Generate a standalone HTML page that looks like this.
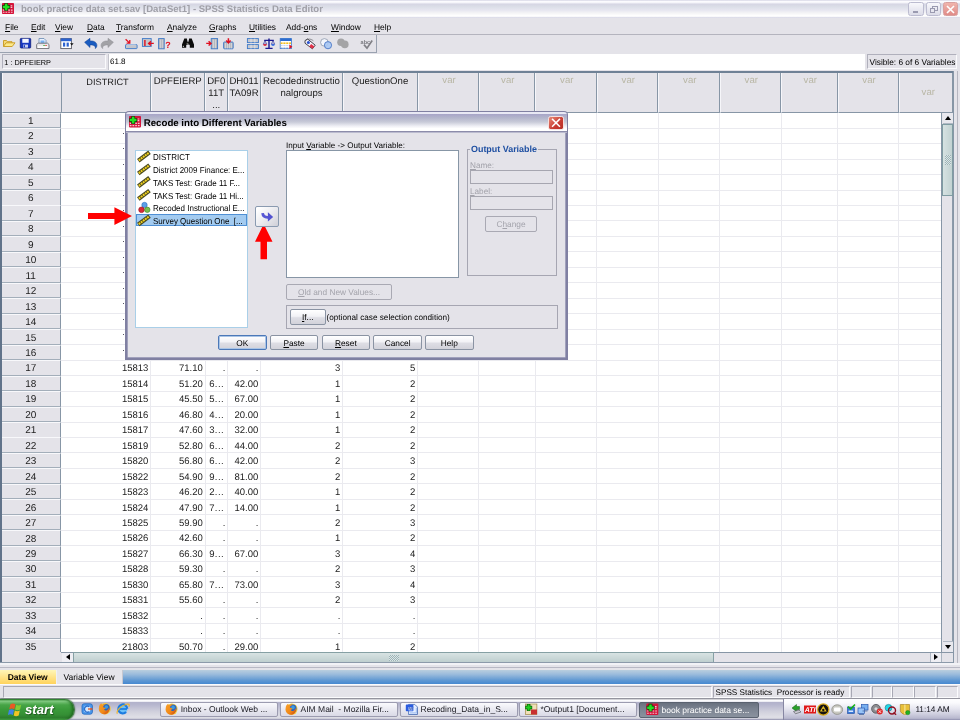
<!DOCTYPE html>
<html><head><meta charset="utf-8"><title>SPSS Statistics Data Editor</title>
<style>
*{box-sizing:border-box;margin:0;padding:0}
html,body{width:960px;height:720px;overflow:hidden}
body{position:relative;background:#e4e3e9;font-family:"Liberation Sans",sans-serif;font-size:9px;color:#000;text-rendering:geometricPrecision}
.a{position:absolute}
svg{position:absolute;overflow:visible}
u{text-decoration:underline}
#title{left:0;top:0;width:960px;height:19px;background:linear-gradient(#cfcfe0 0,#fbfbfe 1.2px,#fbfbfe 2.2px,#d6d6e4 4.2px,#dcdfe8 7px,#e6e6f0 10px,#f4f4f6 13px,#fefefe 15.5px,#fefefe 16.3px,#d8d8e6 17.7px,#e3e2e8 19px)}
#title .t{left:21px;top:3.7px;font-weight:bold;font-size:9.55px;color:#a0a0a8;white-space:nowrap}
#menu{left:0;top:18px;width:960px;height:16px;background:#e4e3e9}
#menu span{position:absolute;top:3.5px;font-size:8.4px;white-space:nowrap}
.wb{position:absolute;top:2px;width:15.5px;height:14px;border-radius:2.5px;border:1px solid #bcbcd0;background:linear-gradient(#f8f8fc,#dcdce8)}
.hc{position:absolute;top:73px;height:39.5px;background:#e4e3e9;border-left:1px solid #f6f6fa;border-right:1px solid #8796a6;border-bottom:1px solid #8796a6;text-align:center;font-size:9.6px;line-height:12px;padding-top:2.8px;overflow:hidden;white-space:nowrap;color:#1c1c1c}
.hc.v{color:#b8b6a4}
.hc span{display:inline-block}
.rh{position:absolute;left:2px;width:58.5px;height:15.5px;background:#e4e3e9;border-top:1px solid #f8f8fb;border-bottom:1px solid #a3aeba;border-right:1px solid #8796a6;text-align:center;font-size:9.5px;line-height:13.5px}
.rh span{display:inline-block;color:#1c1c1c;position:relative;top:1.3px;font-size:10px}
.c{position:absolute;font-size:9.5px;line-height:15.5px;height:15.5px;text-align:right;white-space:nowrap;margin-top:1.2px;color:#1c1c1c}
.vl{position:absolute;width:1px;background:#eaeaef;top:113px;height:539px}
.hl{position:absolute;height:1px;background:#eaeaef;left:61px;width:881px}
.btn{position:absolute;border:1px solid #8a93a3;border-radius:2px;background:linear-gradient(#ffffff,#f2f2f6 45%,#dedee5 55%,#d2d2da);font-size:8.3px;text-align:center;white-space:nowrap}
.btn.dis{background:#e4e3e9;border-color:#a9a9b3;color:#a4a4ac}
.li{position:absolute;left:152.5px;font-size:8.6px;transform:scaleX(0.93);transform-origin:0 50%;white-space:nowrap;line-height:12px;height:12px}
.tk{position:absolute;top:702px;height:15px;border:1px solid #9c9cb0;border-radius:2px;background:linear-gradient(#fafafd,#e9e9f1 50%,#dadae6);font-size:8.5px;line-height:13px;white-space:nowrap;overflow:hidden;color:#202028;padding-left:20px}
.sp{position:absolute;top:685.5px;height:12px;border-top:1px solid #a8a8b4;border-left:1px solid #a8a8b4;border-bottom:1px solid #fbfbfd;border-right:1px solid #fbfbfd}
#root{position:absolute;left:0;top:0;width:960px;height:720px;will-change:transform;transform:translateZ(0)}
</style></head><body><div id="root">

<div id="title" class="a"><div class="a t">book practice data set.sav [DataSet1] - SPSS Statistics Data Editor</div>
<svg style="left:1.8px;top:3.3px" width="12" height="11" viewBox="0 0 12 11.4" preserveAspectRatio="none"><rect x="0" y="0" width="12" height="11.4" rx="0.8" fill="#d4143a"/><path d="M8.600 3h2M8.600 4.600h2M0.800 7.400h10M0.800 9.600h10" stroke="#f6c6d0" stroke-width="1.100" stroke-dasharray="1.700 1"/><path d="M4.200 0.200v7.800M0.300 4.100h7.800" stroke="#0a3a0a" stroke-width="3.800"/><path d="M4.200 0.800v6.600M0.900 4.100h6.600" stroke="#22e022" stroke-width="2.500"/></svg>
<div class="wb" style="left:908px"><div class="a" style="left:4px;top:8px;width:5px;height:2px;background:#9a9ab0"></div></div>
<div class="wb" style="left:925.5px"><div class="a" style="left:5.5px;top:2.5px;width:5.5px;height:5px;border:1px solid #9a9ab0"></div><div class="a" style="left:3px;top:4.5px;width:5.5px;height:5px;border:1px solid #9a9ab0;background:#e6e6ef"></div></div>
<div class="wb" style="left:942.5px;border-color:#d8a0a0;background:linear-gradient(#f0b4ac,#e08c88)"><svg style="left:2.5px;top:2px" width="9" height="9" viewBox="0 0 9 9"><path d="M1 1l7 7M8 1l-7 7" stroke="#fff" stroke-width="1.6"/></svg></div>
</div>
<div id="menu" class="a"><span style="left:5px"><u>F</u>ile</span><span style="left:31px"><u>E</u>dit</span><span style="left:55px"><u>V</u>iew</span><span style="left:87px"><u>D</u>ata</span><span style="left:116px"><u>T</u>ransform</span><span style="left:167px"><u>A</u>nalyze</span><span style="left:209px"><u>G</u>raphs</span><span style="left:249px"><u>U</u>tilities</span><span style="left:286px">Add-<u>o</u>ns</span><span style="left:331px"><u>W</u>indow</span><span style="left:374px"><u>H</u>elp</span></div>
<div class="a" style="left:0;top:34px;width:960px;height:1px;background:#b4b4be"></div>
<div class="a" style="left:0;top:35px;width:377px;height:18px;border-right:1px solid #9aa2b0;border-bottom:1.5px solid #9aa2b0"></div>
<svg style="left:0;top:0" width="400" height="54" viewBox="0 0 400 54">
<!-- open -->
<path d="M3.5 46.5V40.5h3l1 1.2h4.5v1.5" fill="#f4d878" stroke="#c89820" stroke-width="0.9"/>
<path d="M3.5 46.5L6 42.8h9L12.2 46.5z" fill="#fce98a" stroke="#c89820" stroke-width="0.9"/>
<!-- save -->
<rect x="20.3" y="38.4" width="10.4" height="9.6" rx="0.8" fill="#1838c0" stroke="#0c1c78" stroke-width="0.8"/>
<rect x="22.3" y="38.8" width="6.4" height="4" fill="#f4f6ff"/>
<rect x="23" y="44.6" width="5" height="3" fill="#c8d0f0"/><rect x="23.6" y="45.2" width="1.4" height="2.2" fill="#1838c0"/>
<!-- print -->
<path d="M39 43.5V38.5h5l2 2v3z" fill="#eaf2ff" stroke="#6688b0" stroke-width="0.8"/>
<rect x="40.5" y="40.5" width="4" height="2.6" fill="#78b0f0"/>
<path d="M36.6 48.5v-4l1.6-1.3h9.4l1.4 1.3v4z" fill="#e8e8ea" stroke="#707078" stroke-width="0.9"/>
<rect x="38" y="46.3" width="9.6" height="1.6" fill="#fff"/><rect x="45.3" y="45" width="1.5" height="0.9" fill="#e03030"/><rect x="43.3" y="45" width="1.5" height="0.9" fill="#30b030"/>
<!-- dialog recall -->
<rect x="60.8" y="38.6" width="10.6" height="10" fill="#fff" stroke="#5a5a66" stroke-width="0.9"/>
<rect x="60.8" y="38.4" width="10.6" height="2.8" fill="#2c62d0"/>
<rect x="63" y="42.6" width="2.2" height="4" fill="#2c62d0"/><rect x="66.6" y="42.6" width="2.2" height="4" fill="#2c62d0"/>
<path d="M70 43.2h3.6l-1.8 2.2z" fill="#101010"/>
<!-- undo -->
<path d="M84.6 42.3L90 38.3v2.6c4.5-.2 7 1.8 6.9 4.6c-.1 1.4-.6 2.3-1.7 3.1c.6-1.8-.2-3.8-5.2-3.7v2.6z" fill="#1a5cc0" stroke="#0c3c90" stroke-width="0.5"/>
<!-- redo -->
<path d="M113.4 42.3L108 38.3v2.6c-4.5-.2-7 1.8-6.9 4.6c.1 1.4.6 2.3 1.7 3.1c-.6-1.8.2-3.8 5.2-3.7v2.6z" fill="#a2a2a6" stroke="#8c8c92" stroke-width="0.5"/>
<!-- goto case -->
<rect x="125.5" y="44.6" width="11.6" height="4" rx="0.6" fill="#c4c6cc" stroke="#3c78c8" stroke-width="0.9"/>
<path d="M126.8 44.8h9" stroke="#fff" stroke-width="0.6"/>
<path d="M125.6 39.2l3.6 3.4M129.8 40v3.2h-3.2" fill="none" stroke="#e01020" stroke-width="1.3"/>
<!-- goto variable -->
<rect x="142.4" y="38.6" width="8.8" height="7.8" fill="#c4c6cc" stroke="#3c78c8" stroke-width="0.9"/>
<rect x="144.2" y="40" width="1.4" height="6" fill="#e01020"/>
<path d="M153.8 43.4h-4.6M151 41.2l-2.4 2.2l2.4 2.2" fill="none" stroke="#e01020" stroke-width="1.4"/>
<!-- variables -->
<rect x="158.6" y="38.6" width="5.6" height="10.2" fill="#b4b6bc" stroke="#3c78c8" stroke-width="0.9"/>
<path d="M160.5 39.5v8.6M162.4 39.5v8.6" stroke="#d8dae0" stroke-width="0.7"/>
<text x="165.2" y="47.6" font-family="Liberation Sans, sans-serif" font-weight="bold" font-size="9" fill="#e01020">?</text>
<!-- find binoculars -->
<path d="M184.300 38.400h2.600l.6 3.400h1l.6-3.400h2.600l2.300 6.200v3.200h-4.200v-2.600l-.7-.6h-2.200l-.7.6v2.600h-4.200v-3.200z" fill="#0c0c0c"/><rect x="182.800" y="45.800" width="1.200" height="1.200" fill="#b0b0b0"/><rect x="186.600" y="42.800" width="1.800" height="1.200" fill="#707068"/>
<!-- insert cases -->
<rect x="211.2" y="38.6" width="6.4" height="10.2" fill="#b4b6bc" stroke="#3c78c8" stroke-width="0.9"/>
<path d="M213.3 39.5v8.6M215.4 39.5v8.6" stroke="#e4e6ea" stroke-width="0.7"/>
<path d="M206.200 43.400h4.400M208.600 41.200l2.400 2.200l-2.400 2.200" fill="none" stroke="#e01020" stroke-width="1.4"/>
<!-- insert variable -->
<rect x="223.6" y="42" width="9.6" height="6.800" rx="0.800" fill="#b4b6bc" stroke="#3c78c8" stroke-width="0.9"/>
<path d="M225.600 43v5.400M227.600 43v5.400M229.600 43v5.400M231.400 43v5.400" stroke="#e4e6ea" stroke-width="0.7"/>
<path d="M228.400 38.200v4.400M226.200 40.600l2.200 2.400l2.200-2.400" fill="none" stroke="#e01020" stroke-width="1.500"/>
<!-- split file -->
<rect x="247.400" y="38.600" width="11" height="4" fill="#c8cad0" stroke="#3c78c8" stroke-width="0.9"/>
<rect x="247.400" y="44.600" width="11" height="4" fill="#c8cad0" stroke="#3c78c8" stroke-width="0.9"/>
<path d="M251 38.600v4M254.800 38.600v4M251 44.600v4M254.800 44.600v4" stroke="#eceef2" stroke-width="0.7"/>
<!-- weight -->
<path d="M269 38.400v9.600M265.400 48.400h7.200M264.200 40.400h9.600" stroke="#1a1a90" stroke-width="1.400" fill="none"/>
<path d="M263.400 44.200l1.600-3.600l1.600 3.600zM271.400 44.200l1.600-3.600l1.600 3.600z" fill="none" stroke="#1a1a90" stroke-width="0.6"/>
<path d="M263.200 44.200h3.600c0 2-3.600 2-3.600 0z" fill="#e01020"/><path d="M271.200 44.200h3.600c0 2-3.600 2-3.600 0z" fill="#2060e0"/>
<!-- select cases -->
<rect x="280.200" y="38.600" width="11.200" height="10" fill="#fff" stroke="#3c78c8" stroke-width="0.8"/>
<rect x="280.200" y="38.400" width="11.200" height="2.600" fill="#2c6cd0"/>
<path d="M280.600 43.200h10.400" stroke="#f4c020" stroke-width="1.600"/>
<path d="M280.600 45.400h10.400M280.600 47.400h10.400" stroke="#a8c0e8" stroke-width="0.7"/>
<path d="M283 41v7.400M285.800 41v7.400M288.600 41v7.400" stroke="#fff" stroke-width="0.7"/>
<path d="M289.400 44.600l3 2.200l-3 2.200z" fill="#e01020"/>
<!-- value labels tag -->
<path d="M305 40.600l2.600-1.600l7.600 6.200l-2.800 3.600l-7.400-5.600z" fill="#f4f4fa" stroke="#303038" stroke-width="0.9"/>
<path d="M311.200 44l3.200 2.400l-2 2.400l-3.200-2.400z" fill="#e03048"/>
<circle cx="308.400" cy="42.600" r="1.500" fill="#2850d0"/>
<path d="M306.400 40.200c2-2 5-1 7 .6" fill="none" stroke="#505058" stroke-width="0.6"/>
<!-- use sets -->
<circle cx="324.400" cy="42.400" r="3.800" fill="#f4f6fc" stroke="#8a96a8" stroke-width="0.8"/>
<circle cx="328" cy="45.200" r="3.600" fill="#a8c8f4" fill-opacity="0.9" stroke="#3c6cc0" stroke-width="0.8"/>
<!-- show all -->
<circle cx="341" cy="42.200" r="3.800" fill="#a4a4a6"/><circle cx="344.800" cy="44.400" r="3.800" fill="#a4a4a6"/>
<!-- spell -->
<text x="360.600" y="43.800" font-family="Liberation Sans, sans-serif" font-size="5.500" fill="#7a7a80" font-weight="bold">abc</text>
<path d="M364 44.600l3 3.600l5.200-7.600" fill="none" stroke="#808086" stroke-width="1.700"/>
</svg>

<div class="a" style="left:2px;top:54px;width:104px;height:14.5px;border:1px solid #b0b0bc;border-right-color:#fafafc;border-bottom-color:#fafafc;font-size:7.3px;line-height:15.8px;padding-left:1.3px;white-space:nowrap;overflow:hidden">1 : DPFEIERP</div>
<div class="a" style="left:108px;top:54px;width:757px;height:15.5px;background:#fff;border-left:1px solid #c4c4cc;font-size:8px;line-height:16.8px;padding-left:1px;overflow:hidden">61.8</div>
<div class="a" style="left:867px;top:54px;width:90px;height:14.5px;border:1px solid #b0b0bc;border-right-color:#fafafc;border-bottom-color:#fafafc;font-size:8.3px;line-height:14.5px;padding-left:1.5px;white-space:nowrap">Visible: 6 of 6 Variables</div>
<div class="a" style="left:0;top:71px;width:1.8px;height:591px;background:#61738a"></div>
<div class="a" style="left:61px;top:113px;width:881px;height:539px;background:#fff"></div>
<div class="vl" style="left:150.0px"></div>
<div class="vl" style="left:204.5px"></div>
<div class="vl" style="left:227.0px"></div>
<div class="vl" style="left:260.0px"></div>
<div class="vl" style="left:342.0px"></div>
<div class="vl" style="left:417.0px"></div>
<div class="vl" style="left:478.0px"></div>
<div class="vl" style="left:534.5px"></div>
<div class="vl" style="left:596.0px"></div>
<div class="vl" style="left:657.5px"></div>
<div class="vl" style="left:719.0px"></div>
<div class="vl" style="left:780.5px"></div>
<div class="vl" style="left:837.0px"></div>
<div class="vl" style="left:898.0px"></div>
<div class="hl" style="top:127.69999999999999px"></div>
<div class="hl" style="top:143.165px"></div>
<div class="hl" style="top:158.63px"></div>
<div class="hl" style="top:174.09499999999997px"></div>
<div class="hl" style="top:189.56px"></div>
<div class="hl" style="top:205.02499999999998px"></div>
<div class="hl" style="top:220.48999999999998px"></div>
<div class="hl" style="top:235.95499999999998px"></div>
<div class="hl" style="top:251.42px"></div>
<div class="hl" style="top:266.885px"></div>
<div class="hl" style="top:282.35px"></div>
<div class="hl" style="top:297.815px"></div>
<div class="hl" style="top:313.28px"></div>
<div class="hl" style="top:328.745px"></div>
<div class="hl" style="top:344.21px"></div>
<div class="hl" style="top:359.67499999999995px"></div>
<div class="hl" style="top:375.14px"></div>
<div class="hl" style="top:390.60499999999996px"></div>
<div class="hl" style="top:406.07px"></div>
<div class="hl" style="top:421.53499999999997px"></div>
<div class="hl" style="top:437.0px"></div>
<div class="hl" style="top:452.465px"></div>
<div class="hl" style="top:467.93px"></div>
<div class="hl" style="top:483.395px"></div>
<div class="hl" style="top:498.85999999999996px"></div>
<div class="hl" style="top:514.325px"></div>
<div class="hl" style="top:529.79px"></div>
<div class="hl" style="top:545.255px"></div>
<div class="hl" style="top:560.72px"></div>
<div class="hl" style="top:576.185px"></div>
<div class="hl" style="top:591.65px"></div>
<div class="hl" style="top:607.115px"></div>
<div class="hl" style="top:622.5799999999999px"></div>
<div class="hl" style="top:638.045px"></div>
<div class="a" style="left:0;top:70.5px;width:953px;height:2.5px;background:#6f8196"></div>
<div class="hc" style="left:2px;width:59.8px;z-index:1"></div>
<div class="hc" style="left:61px;width:89.5px;padding-left:3.5px;font-size:9.2px"><span>DISTRICT</span></div>
<div class="hc" style="left:150.5px;width:54.5px"><span>DPFEIERP</span></div>
<div class="hc" style="left:205px;width:22.5px"><span>DF0<br>11T<br>...</span></div>
<div class="hc" style="left:227.5px;width:33.0px"><span>DH011<br>TA09R</span></div>
<div class="hc" style="left:260.5px;width:82.0px"><span>Recodedinstructio<br>nalgroups</span></div>
<div class="hc" style="left:342.5px;width:75.0px"><span>QuestionOne</span></div>
<div class="hc v" style="left:417.5px;width:61.0px;padding-left:2px;padding-top:2.3px"><span>var</span></div>
<div class="hc v" style="left:478.5px;width:56.5px;padding-left:2px;padding-top:2.3px"><span>var</span></div>
<div class="hc v" style="left:535px;width:61.5px;padding-left:2px;padding-top:2.3px"><span>var</span></div>
<div class="hc v" style="left:596.5px;width:61.5px;padding-left:2px;padding-top:2.3px"><span>var</span></div>
<div class="hc v" style="left:658px;width:61.5px;padding-left:2px;padding-top:2.3px"><span>var</span></div>
<div class="hc v" style="left:719.5px;width:61.5px;padding-left:2px;padding-top:2.3px"><span>var</span></div>
<div class="hc v" style="left:781px;width:56.5px;padding-left:2px;padding-top:2.3px"><span>var</span></div>
<div class="hc v" style="left:837.5px;width:61.0px;padding-left:2px;padding-top:2.3px"><span>var</span></div>
<div class="hc v" style="left:898.5px;width:54.0px;padding-top:14.300px;padding-left:5.5px"><span>var</span></div>
<div class="rh" style="top:112.7px"><span>1</span></div>
<div class="rh" style="top:128.165px"><span>2</span></div>
<div class="rh" style="top:143.63px"><span>3</span></div>
<div class="rh" style="top:159.095px"><span>4</span></div>
<div class="rh" style="top:174.56px"><span>5</span></div>
<div class="rh" style="top:190.025px"><span>6</span></div>
<div class="rh" style="top:205.49px"><span>7</span></div>
<div class="rh" style="top:220.95499999999998px"><span>8</span></div>
<div class="rh" style="top:236.42000000000002px"><span>9</span></div>
<div class="rh" style="top:251.885px"><span>10</span></div>
<div class="rh" style="top:267.35px"><span>11</span></div>
<div class="rh" style="top:282.815px"><span>12</span></div>
<div class="rh" style="top:298.28px"><span>13</span></div>
<div class="rh" style="top:313.745px"><span>14</span></div>
<div class="rh" style="top:329.21px"><span>15</span></div>
<div class="rh" style="top:344.675px"><span>16</span></div>
<div class="rh" style="top:360.14px"><span>17</span></div>
<div class="rh" style="top:375.60499999999996px"><span>18</span></div>
<div class="rh" style="top:391.07px"><span>19</span></div>
<div class="rh" style="top:406.53499999999997px"><span>20</span></div>
<div class="rh" style="top:422.0px"><span>21</span></div>
<div class="rh" style="top:437.465px"><span>22</span></div>
<div class="rh" style="top:452.93px"><span>23</span></div>
<div class="rh" style="top:468.395px"><span>24</span></div>
<div class="rh" style="top:483.85999999999996px"><span>25</span></div>
<div class="rh" style="top:499.325px"><span>26</span></div>
<div class="rh" style="top:514.79px"><span>27</span></div>
<div class="rh" style="top:530.255px"><span>28</span></div>
<div class="rh" style="top:545.72px"><span>29</span></div>
<div class="rh" style="top:561.1850000000001px"><span>30</span></div>
<div class="rh" style="top:576.65px"><span>31</span></div>
<div class="rh" style="top:592.115px"><span>32</span></div>
<div class="rh" style="top:607.58px"><span>33</span></div>
<div class="rh" style="top:623.045px"><span>34</span></div>
<div class="rh" style="top:638.51px"><span>35</span></div>
<div class="a" style="left:2px;top:651.5px;width:59px;height:11px;background:#e4e3e9"></div>
<div class="c" style="top:360.14px;left:61px;width:87.3px">15813</div>
<div class="c" style="top:360.14px;left:150.5px;width:52.3px">71.10</div>
<div class="c" style="top:360.14px;left:205px;width:20.3px">.</div>
<div class="c" style="top:360.14px;left:227.5px;width:30.8px">.</div>
<div class="c" style="top:360.14px;left:260.5px;width:79.8px">3</div>
<div class="c" style="top:360.14px;left:342.5px;width:72.8px">5</div>
<div class="c" style="top:375.60499999999996px;left:61px;width:87.3px">15814</div>
<div class="c" style="top:375.60499999999996px;left:150.5px;width:52.3px">51.20</div>
<div class="c" style="top:375.60499999999996px;left:209.2px;text-align:left;letter-spacing:0.4px;transform-origin:0 50%">6...</div>
<div class="c" style="top:375.60499999999996px;left:227.5px;width:30.8px">42.00</div>
<div class="c" style="top:375.60499999999996px;left:260.5px;width:79.8px">1</div>
<div class="c" style="top:375.60499999999996px;left:342.5px;width:72.8px">2</div>
<div class="c" style="top:391.07px;left:61px;width:87.3px">15815</div>
<div class="c" style="top:391.07px;left:150.5px;width:52.3px">45.50</div>
<div class="c" style="top:391.07px;left:209.2px;text-align:left;letter-spacing:0.4px;transform-origin:0 50%">5...</div>
<div class="c" style="top:391.07px;left:227.5px;width:30.8px">67.00</div>
<div class="c" style="top:391.07px;left:260.5px;width:79.8px">1</div>
<div class="c" style="top:391.07px;left:342.5px;width:72.8px">2</div>
<div class="c" style="top:406.53499999999997px;left:61px;width:87.3px">15816</div>
<div class="c" style="top:406.53499999999997px;left:150.5px;width:52.3px">46.80</div>
<div class="c" style="top:406.53499999999997px;left:209.2px;text-align:left;letter-spacing:0.4px;transform-origin:0 50%">4...</div>
<div class="c" style="top:406.53499999999997px;left:227.5px;width:30.8px">20.00</div>
<div class="c" style="top:406.53499999999997px;left:260.5px;width:79.8px">1</div>
<div class="c" style="top:406.53499999999997px;left:342.5px;width:72.8px">2</div>
<div class="c" style="top:422.0px;left:61px;width:87.3px">15817</div>
<div class="c" style="top:422.0px;left:150.5px;width:52.3px">47.60</div>
<div class="c" style="top:422.0px;left:209.2px;text-align:left;letter-spacing:0.4px;transform-origin:0 50%">3...</div>
<div class="c" style="top:422.0px;left:227.5px;width:30.8px">32.00</div>
<div class="c" style="top:422.0px;left:260.5px;width:79.8px">1</div>
<div class="c" style="top:422.0px;left:342.5px;width:72.8px">2</div>
<div class="c" style="top:437.465px;left:61px;width:87.3px">15819</div>
<div class="c" style="top:437.465px;left:150.5px;width:52.3px">52.80</div>
<div class="c" style="top:437.465px;left:209.2px;text-align:left;letter-spacing:0.4px;transform-origin:0 50%">6...</div>
<div class="c" style="top:437.465px;left:227.5px;width:30.8px">44.00</div>
<div class="c" style="top:437.465px;left:260.5px;width:79.8px">2</div>
<div class="c" style="top:437.465px;left:342.5px;width:72.8px">2</div>
<div class="c" style="top:452.93px;left:61px;width:87.3px">15820</div>
<div class="c" style="top:452.93px;left:150.5px;width:52.3px">56.80</div>
<div class="c" style="top:452.93px;left:209.2px;text-align:left;letter-spacing:0.4px;transform-origin:0 50%">6...</div>
<div class="c" style="top:452.93px;left:227.5px;width:30.8px">42.00</div>
<div class="c" style="top:452.93px;left:260.5px;width:79.8px">2</div>
<div class="c" style="top:452.93px;left:342.5px;width:72.8px">3</div>
<div class="c" style="top:468.395px;left:61px;width:87.3px">15822</div>
<div class="c" style="top:468.395px;left:150.5px;width:52.3px">54.90</div>
<div class="c" style="top:468.395px;left:209.2px;text-align:left;letter-spacing:0.4px;transform-origin:0 50%">9...</div>
<div class="c" style="top:468.395px;left:227.5px;width:30.8px">81.00</div>
<div class="c" style="top:468.395px;left:260.5px;width:79.8px">2</div>
<div class="c" style="top:468.395px;left:342.5px;width:72.8px">2</div>
<div class="c" style="top:483.85999999999996px;left:61px;width:87.3px">15823</div>
<div class="c" style="top:483.85999999999996px;left:150.5px;width:52.3px">46.20</div>
<div class="c" style="top:483.85999999999996px;left:209.2px;text-align:left;letter-spacing:0.4px;transform-origin:0 50%">2...</div>
<div class="c" style="top:483.85999999999996px;left:227.5px;width:30.8px">40.00</div>
<div class="c" style="top:483.85999999999996px;left:260.5px;width:79.8px">1</div>
<div class="c" style="top:483.85999999999996px;left:342.5px;width:72.8px">2</div>
<div class="c" style="top:499.325px;left:61px;width:87.3px">15824</div>
<div class="c" style="top:499.325px;left:150.5px;width:52.3px">47.90</div>
<div class="c" style="top:499.325px;left:209.2px;text-align:left;letter-spacing:0.4px;transform-origin:0 50%">7...</div>
<div class="c" style="top:499.325px;left:227.5px;width:30.8px">14.00</div>
<div class="c" style="top:499.325px;left:260.5px;width:79.8px">1</div>
<div class="c" style="top:499.325px;left:342.5px;width:72.8px">2</div>
<div class="c" style="top:514.79px;left:61px;width:87.3px">15825</div>
<div class="c" style="top:514.79px;left:150.5px;width:52.3px">59.90</div>
<div class="c" style="top:514.79px;left:205px;width:20.3px">.</div>
<div class="c" style="top:514.79px;left:227.5px;width:30.8px">.</div>
<div class="c" style="top:514.79px;left:260.5px;width:79.8px">2</div>
<div class="c" style="top:514.79px;left:342.5px;width:72.8px">3</div>
<div class="c" style="top:530.255px;left:61px;width:87.3px">15826</div>
<div class="c" style="top:530.255px;left:150.5px;width:52.3px">42.60</div>
<div class="c" style="top:530.255px;left:205px;width:20.3px">.</div>
<div class="c" style="top:530.255px;left:227.5px;width:30.8px">.</div>
<div class="c" style="top:530.255px;left:260.5px;width:79.8px">1</div>
<div class="c" style="top:530.255px;left:342.5px;width:72.8px">2</div>
<div class="c" style="top:545.72px;left:61px;width:87.3px">15827</div>
<div class="c" style="top:545.72px;left:150.5px;width:52.3px">66.30</div>
<div class="c" style="top:545.72px;left:209.2px;text-align:left;letter-spacing:0.4px;transform-origin:0 50%">9...</div>
<div class="c" style="top:545.72px;left:227.5px;width:30.8px">67.00</div>
<div class="c" style="top:545.72px;left:260.5px;width:79.8px">3</div>
<div class="c" style="top:545.72px;left:342.5px;width:72.8px">4</div>
<div class="c" style="top:561.1850000000001px;left:61px;width:87.3px">15828</div>
<div class="c" style="top:561.1850000000001px;left:150.5px;width:52.3px">59.30</div>
<div class="c" style="top:561.1850000000001px;left:205px;width:20.3px">.</div>
<div class="c" style="top:561.1850000000001px;left:227.5px;width:30.8px">.</div>
<div class="c" style="top:561.1850000000001px;left:260.5px;width:79.8px">2</div>
<div class="c" style="top:561.1850000000001px;left:342.5px;width:72.8px">3</div>
<div class="c" style="top:576.65px;left:61px;width:87.3px">15830</div>
<div class="c" style="top:576.65px;left:150.5px;width:52.3px">65.80</div>
<div class="c" style="top:576.65px;left:209.2px;text-align:left;letter-spacing:0.4px;transform-origin:0 50%">7...</div>
<div class="c" style="top:576.65px;left:227.5px;width:30.8px">73.00</div>
<div class="c" style="top:576.65px;left:260.5px;width:79.8px">3</div>
<div class="c" style="top:576.65px;left:342.5px;width:72.8px">4</div>
<div class="c" style="top:592.115px;left:61px;width:87.3px">15831</div>
<div class="c" style="top:592.115px;left:150.5px;width:52.3px">55.60</div>
<div class="c" style="top:592.115px;left:205px;width:20.3px">.</div>
<div class="c" style="top:592.115px;left:227.5px;width:30.8px">.</div>
<div class="c" style="top:592.115px;left:260.5px;width:79.8px">2</div>
<div class="c" style="top:592.115px;left:342.5px;width:72.8px">3</div>
<div class="c" style="top:607.58px;left:61px;width:87.3px">15832</div>
<div class="c" style="top:607.58px;left:150.5px;width:52.3px">.</div>
<div class="c" style="top:607.58px;left:205px;width:20.3px">.</div>
<div class="c" style="top:607.58px;left:227.5px;width:30.8px">.</div>
<div class="c" style="top:607.58px;left:260.5px;width:79.8px">.</div>
<div class="c" style="top:607.58px;left:342.5px;width:72.8px">.</div>
<div class="c" style="top:623.045px;left:61px;width:87.3px">15833</div>
<div class="c" style="top:623.045px;left:150.5px;width:52.3px">.</div>
<div class="c" style="top:623.045px;left:205px;width:20.3px">.</div>
<div class="c" style="top:623.045px;left:227.5px;width:30.8px">.</div>
<div class="c" style="top:623.045px;left:260.5px;width:79.8px">.</div>
<div class="c" style="top:623.045px;left:342.5px;width:72.8px">.</div>
<div class="c" style="top:638.51px;left:61px;width:87.3px">21803</div>
<div class="c" style="top:638.51px;left:150.5px;width:52.3px">50.70</div>
<div class="c" style="top:638.51px;left:205px;width:20.3px">.</div>
<div class="c" style="top:638.51px;left:227.5px;width:30.8px">29.00</div>
<div class="c" style="top:638.51px;left:260.5px;width:79.8px">1</div>
<div class="c" style="top:638.51px;left:342.5px;width:72.8px">2</div>
<div class="a" style="left:941px;top:113px;width:12px;height:549.5px;background:#e4e3e9;border-left:1.5px solid #8796a6;border-right:1px solid #8c9aaa"></div>
<div class="a" style="left:942.5px;top:113px;width:10px;height:10.5px;background:#e8e8ee;border-bottom:1px solid #b0b8c4"><svg style="left:2px;top:3px" width="6" height="4" viewBox="0 0 6 4"><path d="M0 4L3 0L6 4z" fill="#000"/></svg></div>
<div class="a" style="left:942px;top:124px;width:10.5px;height:72px;background:linear-gradient(90deg,#d6e2e2,#c2d2d2);border:1px solid #7f9ca2"></div>
<div class="a" style="left:944.5px;top:155px;width:6px;height:10px;background:repeating-conic-gradient(#9db3b7 0 25%,#dbe6e6 0 50%) 0 0/2px 2px"></div>
<div class="a" style="left:942.5px;top:640.5px;width:10px;height:11px;background:#e8e8ee;border-top:1px solid #b0b8c4"><svg style="left:2px;top:3.5px" width="6" height="4" viewBox="0 0 6 4"><path d="M0 0L3 4L6 0z" fill="#000"/></svg></div>
<div class="a" style="left:61px;top:651.5px;width:892px;height:11px;background:#e4e3e9;border-top:1px solid #8796a6;border-bottom:1px solid #8c9aaa"></div>
<div class="a" style="left:61.5px;top:652.5px;width:11.5px;height:9.5px;background:#eeeef3"><svg style="left:4px;top:1.5px" width="4" height="6" viewBox="0 0 4 6"><path d="M4 0L0 3L4 6z" fill="#000"/></svg></div>
<div class="a" style="left:73px;top:652px;width:641px;height:10.5px;background:linear-gradient(#d8e3e3,#bfcfcf);border:1px solid #86a0a4"></div>
<div class="a" style="left:389px;top:654.5px;width:10px;height:6px;background:repeating-conic-gradient(#9db3b7 0 25%,#dbe6e6 0 50%) 0 0/2px 2px"></div>
<div class="a" style="left:929.5px;top:652.5px;width:11px;height:9.5px;background:#eeeef3;border-left:1px solid #b0b8c4"><svg style="left:3.5px;top:1.5px" width="4" height="6" viewBox="0 0 4 6"><path d="M0 0L4 3L0 6z" fill="#000"/></svg></div>
<div class="a" style="left:941px;top:652.5px;width:11px;height:9px;background:#e4e3e9;border-left:1px solid #aab4c0"></div>
<div class="a" style="left:952.5px;top:71px;width:1.5px;height:592px;background:#8796a6"></div>
<div class="a" style="left:957px;top:71px;width:1px;height:592px;background:#b6b6c0"></div>
<div class="a" style="left:0;top:661.5px;width:953px;height:1px;background:#8c9aaa"></div>
<div class="a" style="left:0;top:662.5px;width:960px;height:2.5px;background:#f2f2f6"></div>
<div class="a" style="left:0;top:667.3px;width:960px;height:1px;background:#b8b8c4"></div>
<div class="a" style="left:0;top:670px;width:960px;height:13.5px;background:linear-gradient(#b9cede 0,#9cbcdc 30%,#5e97d2 75%,#4688d0 100%)"></div>
<div class="a" style="left:0;top:670px;width:56.5px;height:13.5px;background:linear-gradient(#fff6b8,#ffe48a 50%,#ffd35c);font-weight:bold;font-size:8.5px;line-height:14.4px;text-align:center;white-space:nowrap;border-right:1px solid #f0f0f4">Data View</div>
<div class="a" style="left:56.5px;top:670px;width:66px;height:13.5px;background:#e6e5ea;font-size:8.5px;line-height:14.4px;text-align:center;white-space:nowrap;border-right:1px solid #c8c8d0">Variable View</div>
<div class="a" style="left:0;top:683.5px;width:960px;height:1.5px;background:#fafafc"></div>
<div class="sp" style="left:3px;width:709px"></div>
<div class="sp" style="left:713px;width:137px;font-size:8.17px;line-height:11.6px;padding-left:1.5px;white-space:pre">SPSS Statistics  Processor is ready</div>
<div class="sp" style="left:851px;width:20px"></div>
<div class="sp" style="left:871.5px;width:20.0px"></div>
<div class="sp" style="left:892px;width:21.5px"></div>
<div class="sp" style="left:914px;width:22px"></div>
<div class="sp" style="left:936.5px;width:21.5px"></div>
<div class="a" style="left:0;top:698px;width:960px;height:22px;background:linear-gradient(#94949e 0,#94949e 5%,#fbfbfd 8%,#fbfbfd 15%,#b2b2cb 20%,#b6b6ce 30%,#cfcfdc 60%,#dedee5 85%,#dcdce4 92%,#a2a2ba 97%,#9a9ab4 100%)"></div>
<div class="a" style="left:0;top:698.5px;width:73.5px;height:21.500px;border-radius:0 10px 10px 0/0 11px 11px 0;background:linear-gradient(#2f7f2f 0,#3a8f3a 4%,#86cc86 9%,#6cbc6c 16%,#46a446 28%,#3a9a3a 50%,#358f35 75%,#2c7c2c 90%,#4aa84a 100%);box-shadow:1px 0 1.500px #1e5a1e,inset -3px 0 3px -1px #1f6a1f"></div>
<svg style="left:7.500px;top:702.500px" width="15" height="13.500" viewBox="0 0 15 13.500"><path d="M2.400 1.200c1.800-1.100 3.400-1 5 .1l-1.100 4.900c-1.600-1-3.200-1.100-5 0z" fill="#ea5a24"/><path d="M8.200 1.700c1.600 1 3.200 1 5 0l-1.100 4.900c-1.800 1-3.400 1-5 0z" fill="#84cc34"/><path d="M1 7c1.800-1.100 3.400-1 5 .1l-1.100 4.900c-1.600-1-3.200-1.100-5 0z" fill="#3f82e6"/><path d="M6.800 7.500c1.600 1 3.200 1 5 0l-1.100 4.900c-1.800 1-3.400 1-5 0z" fill="#f2c424"/></svg>
<div class="a" style="left:25px;top:701.5px;font-size:13.2px;font-weight:bold;font-style:italic;color:#fff;line-height:15px;text-shadow:0.7px 0.7px 1px #1c501c">start</div>
<!-- quick launch -->
<svg style="left:80px;top:702px" width="52" height="14" viewBox="0 0 52 14">
<rect x="2" y="1.800" width="10.400" height="10.400" rx="2.200" fill="#4a98ec" stroke="#2266c0" stroke-width="0.800"/><rect x="4.200" y="3.800" width="6" height="6.400" rx="1.500" fill="#d6e6fa"/><path d="M9.400 4.800a3 3 0 1 0 0 4.600" fill="none" stroke="#2c70d0" stroke-width="1.300"/><path d="M8 7h3.600" stroke="#e05828" stroke-width="1.300"/><path d="M10.800 5.400l2 1.600l-2 1.600z" fill="#e05828"/>
<g transform="translate(19 0.800)"><circle cx="6.100" cy="5.900" r="5.700" fill="#f4c838"/><circle cx="6.800" cy="5.300" r="4" fill="#2a64c0"/><circle cx="7.300" cy="4.200" r="1.800" fill="#3c9ce0"/><path d="M.5 2.500c.5-1 1.500-1.800 2-2c0 .8.300 1.200 1 1.500c1.200-.8 2.500-.8 3.400-.3c-1.700.4-2.700 1.300-2.800 2.700c1.400.2 2.500.8 2.700 1.600c-.8 0-1.500.3-1.700 1c.5.800 1.800 1.200 3.200.3c1-.6 1.700-1.600 2-2.800c.4 2.200-.200 4.300-1.700 5.700c-1.600 1.400-4.200 1.800-6.200.6c-2.200-1.300-3.100-3.800-2.400-6.300c0-.8.200-1.400.5-2z" fill="url(#ffg)"/></g>
<circle cx="42.800" cy="7" r="4.700" fill="#6cc0f8"/><path d="M47.300 6.800a4.500 4.500 0 1 0-1.200 3.200" fill="none" stroke="#1c7ce0" stroke-width="2.100"/><path d="M39.400 7h7.600" stroke="#1c7ce0" stroke-width="1.700"/><path d="M37.300 11.800c-1.200-2.600 3-8.400 10.200-9.800c2.200-.1 2.200 1.400 1.200 2.600" fill="none" stroke="#f0b428" stroke-width="1.100"/>
</svg>
<!-- task buttons -->
<div class="tk" style="left:159.700px;width:118px">Inbox - Outlook Web ...</div>
<div class="tk" style="left:279.600px;width:118px;white-space:pre">AIM Mail  - Mozilla Fir...</div>
<div class="tk" style="left:399.500px;width:118px">Recoding_Data_in_S...</div>
<div class="tk" style="left:519.400px;width:118px">*Output1 [Document...</div>
<div class="tk" style="left:639px;width:119.500px;top:701.500px;height:16px;background:linear-gradient(#69717f,#7a8290 40%,#8a929e);border-color:#5a6270;color:#fff;line-height:14.500px;padding-left:21.500px">book practice data se...</div>
<svg style="left:0;top:700px" width="960" height="20" viewBox="0 700 960 20">
<defs><linearGradient id="ffg" x1="0" y1="0" x2="1" y2="1"><stop offset="0" stop-color="#f8a028"/><stop offset="0.600" stop-color="#f08818"/><stop offset="1" stop-color="#c83c10"/></linearGradient></defs>
<g transform="translate(165.800 703.200)"><circle cx="6.100" cy="5.900" r="5.700" fill="#f4c838"/><circle cx="6.800" cy="5.300" r="4" fill="#2a64c0"/><circle cx="7.300" cy="4.200" r="1.800" fill="#3c9ce0"/><path d="M.5 2.500c.5-1 1.500-1.800 2-2c0 .8.300 1.200 1 1.500c1.200-.8 2.500-.8 3.400-.3c-1.700.4-2.700 1.300-2.800 2.700c1.400.2 2.500.8 2.700 1.600c-.8 0-1.500.3-1.700 1c.5.800 1.800 1.200 3.200.3c1-.6 1.700-1.600 2-2.800c.4 2.200-.200 4.300-1.700 5.700c-1.600 1.400-4.200 1.800-6.200.6c-2.200-1.300-3.100-3.800-2.400-6.300c0-.8.200-1.400.5-2z" fill="url(#ffg)"/></g><g transform="translate(285.700 703.200)"><circle cx="6.100" cy="5.900" r="5.700" fill="#f4c838"/><circle cx="6.800" cy="5.300" r="4" fill="#2a64c0"/><circle cx="7.300" cy="4.200" r="1.800" fill="#3c9ce0"/><path d="M.5 2.500c.5-1 1.500-1.800 2-2c0 .8.300 1.200 1 1.500c1.200-.8 2.500-.8 3.400-.3c-1.700.4-2.700 1.300-2.800 2.700c1.400.2 2.500.8 2.700 1.600c-.8 0-1.500.3-1.700 1c.5.800 1.800 1.200 3.200.3c1-.6 1.700-1.600 2-2.800c.4 2.200-.200 4.300-1.700 5.700c-1.600 1.400-4.200 1.800-6.200.6c-2.200-1.300-3.100-3.800-2.400-6.300c0-.8.200-1.400.5-2z" fill="url(#ffg)"/></g>
<!-- word doc -->
<path d="M408.600 704.400h6.200l2.700 2.700v7.400h-8.900z" fill="#e4eeff" stroke="#4468b0" stroke-width="0.800"/><path d="M410 712.800h6.400v-5" fill="none" stroke="#a8c4f4" stroke-width="1.200"/><rect x="405.800" y="704.600" width="7.600" height="6.600" rx="0.800" fill="#2a5ce0"/><rect x="408.600" y="707" width="4" height="3.400" fill="#dce8ff"/><text x="409" y="710.300" font-family="Liberation Sans, sans-serif" font-size="4.500" font-weight="bold" fill="#1c44b0">W</text>
<!-- output icon -->
<rect x="525.400" y="704" width="11.500" height="10.500" fill="#f0e0b8" stroke="#a08848" stroke-width="0.7"/><rect x="531" y="709.500" width="6" height="5" fill="#c83030"/><path d="M528.600 704v7M525.200 707.500h7" stroke="#086008" stroke-width="3.600"/><path d="M528.600 704.600v5.800M525.800 707.500h5.800" stroke="#20d020" stroke-width="2"/>
<!-- spss icon -->
<g transform="translate(646.300 703.600)"><rect x="0" y="0" width="12" height="11.4" rx="0.8" fill="#d4143a"/><path d="M8.600 3h2M8.600 4.600h2M0.800 7.400h10M0.800 9.600h10" stroke="#f6c6d0" stroke-width="1.100" stroke-dasharray="1.700 1"/><path d="M4.200 0.200v7.800M0.300 4.100h7.800" stroke="#0a3a0a" stroke-width="3.800"/><path d="M4.200 0.800v6.600M0.900 4.100h6.600" stroke="#22e022" stroke-width="2.500"/></g>
</svg>
<!-- tray -->
<div class="a" style="left:758.500px;top:700px;width:24px;height:20px;display:none"></div>
<div class="a" style="left:782.500px;top:699px;width:177.500px;height:21px;background:linear-gradient(#fdfdff 0,#fafafd 18%,#e6e6f0 45%,#d0d0e0 70%,#b8b8ce 92%,#8c8cac 100%);border-left:1px solid #8686a2"></div>
<svg style="left:0;top:700px" width="960" height="20" viewBox="0 700 960 20">
<path d="M792 708l4.500-3.500v2h3v3h-3v2z" fill="#28a028" stroke="#106010" stroke-width="0.5"/><path d="M793.500 711.500l5.500-1.500l2 2l-5.500 1.800z" fill="#c8c8d0" stroke="#505058" stroke-width="0.6"/>
<rect x="804" y="705.500" width="12" height="8" fill="#e01818"/><text x="804.800" y="712.400" font-family="Liberation Sans, sans-serif" font-size="7" font-weight="bold" font-style="italic" fill="#fff">ATI</text>
<circle cx="823.300" cy="709.500" r="5.600" fill="#181410" stroke="#d8a818" stroke-width="1.200"/><path d="M823.300 705.800l3.400 5.800h-6.800z" fill="#e8c020"/><circle cx="823.300" cy="710" r="1.200" fill="#181410"/>
<ellipse cx="837.200" cy="709.600" rx="5.400" ry="4.800" fill="#c8c8c0" stroke="#8c8c84" stroke-width="0.8"/><rect x="834" y="707.500" width="6.500" height="4" rx="1" fill="#fff"/>
<rect x="847.500" y="707" width="7" height="6.500" fill="#3878d8" stroke="#1c4ca0" stroke-width="0.6"/><path d="M848 706.500l2.500 2.500l4.500-4.500" fill="none" stroke="#18b018" stroke-width="1.600"/><rect x="848.600" y="710.500" width="4.500" height="1.500" fill="#d8e8ff"/>
<rect x="861.500" y="704.500" width="6.500" height="5.500" fill="#78b0f0" stroke="#2858b0" stroke-width="0.7"/><rect x="858" y="708" width="6.500" height="5.500" fill="#98c4f8" stroke="#2858b0" stroke-width="0.7"/><path d="M859 714.500h5M862.500 711h5" stroke="#4868a0" stroke-width="0.8"/>
<circle cx="876" cy="708.800" r="4.400" fill="#8c8c90" stroke="#505058" stroke-width="0.8"/><circle cx="876" cy="708.800" r="1.600" fill="#d8d8dc"/><circle cx="879.800" cy="711.600" r="3" fill="#e02828"/><path d="M878.500 710.300l2.600 2.600M881.100 710.300l-2.600 2.600" stroke="#fff" stroke-width="0.8"/>
<circle cx="888.500" cy="707.800" r="3.400" fill="#20d8e8" stroke="#107888" stroke-width="0.6"/><circle cx="892" cy="710.500" r="3.500" fill="none" stroke="#901020" stroke-width="1.400"/><path d="M893.500 712.500l2.600 2.200" stroke="#901020" stroke-width="1.500"/>
<path d="M900.300 704.500h9.200v6c0 2-2 3.200-4.600 4.200c-2.600-1-4.600-2.200-4.600-4.200z" fill="#e8c038" stroke="#a07818" stroke-width="0.6"/><path d="M904.900 704.500v10" stroke="#fff4c0" stroke-width="0.8"/><circle cx="907.800" cy="712.600" r="2.200" fill="#20b020" stroke="#0c700c" stroke-width="0.4"/>
</svg>
<div class="a" style="left:915.400px;top:705px;font-size:8.260px;line-height:10px;white-space:nowrap;color:#101018">11:14 AM</div>

<!-- tick marks -->
<div class="a" style="left:123px;top:132.8px;width:1.300px;height:1.200px;background:#555564"></div><div class="a" style="left:123px;top:148.3px;width:1.300px;height:1.200px;background:#555564"></div><div class="a" style="left:123px;top:163.8px;width:1.300px;height:1.200px;background:#555564"></div><div class="a" style="left:123px;top:179.3px;width:1.300px;height:1.200px;background:#555564"></div><div class="a" style="left:123px;top:194.8px;width:1.300px;height:1.200px;background:#555564"></div><div class="a" style="left:123px;top:210.3px;width:1.300px;height:1.200px;background:#555564"></div><div class="a" style="left:123px;top:225.8px;width:1.300px;height:1.200px;background:#555564"></div><div class="a" style="left:123px;top:241.3px;width:1.300px;height:1.200px;background:#555564"></div><div class="a" style="left:123px;top:256.8px;width:1.300px;height:1.200px;background:#555564"></div><div class="a" style="left:123px;top:272.3px;width:1.300px;height:1.200px;background:#555564"></div><div class="a" style="left:123px;top:287.8px;width:1.300px;height:1.200px;background:#555564"></div><div class="a" style="left:123px;top:303.3px;width:1.300px;height:1.200px;background:#555564"></div><div class="a" style="left:123px;top:318.8px;width:1.300px;height:1.200px;background:#555564"></div><div class="a" style="left:123px;top:334.3px;width:1.300px;height:1.200px;background:#555564"></div><div class="a" style="left:123px;top:349.8px;width:1.300px;height:1.200px;background:#555564"></div>
<div class="a" id="dlg" style="left:124.5px;top:111px;width:443.5px;height:248.5px;border-radius:4px 4px 0 0;background:#8080a2"></div>
<div class="a" style="left:125.5px;top:112px;width:441.5px;height:21px;border-radius:3px 3px 0 0;background:linear-gradient(#e8e8f4 0,#e8e8f4 1.6px,#a8a6c8 2.3px,#b4b6cc 6px,#c8cad8 10px,#eeeef4 14px,#fff 16.5px,#fff 18.6px,#8c8caa 19.3px,#8c8caa 20px,#dcdce8 21px)"></div>
<div class="a" style="left:127.5px;top:133px;width:437.5px;height:224px;background:#e4e3e9;box-shadow:0 0 0 0.5px #c2c2d6"></div>
<svg style="left:129px;top:116.4px" width="12" height="11.4" viewBox="0 0 12 11.4"><rect x="0" y="0" width="12" height="11.4" rx="0.8" fill="#d4143a"/><path d="M8.600 3h2M8.600 4.600h2M0.800 7.400h10M0.800 9.600h10" stroke="#f6c6d0" stroke-width="1.100" stroke-dasharray="1.700 1"/><path d="M4.200 0.200v7.800M0.300 4.100h7.800" stroke="#0a3a0a" stroke-width="3.800"/><path d="M4.200 0.800v6.600M0.900 4.100h6.600" stroke="#22e022" stroke-width="2.500"/></svg>
<div class="a" style="left:143.7px;top:118.2px;font-size:9.7px;font-weight:bold;white-space:nowrap;letter-spacing:0px;line-height:11px">Recode into Different Variables</div>
<div class="a" style="left:548.2px;top:115.8px;width:16.2px;height:14.6px;border-radius:2.5px;border:1px solid #f4e0e0;background:linear-gradient(135deg,#e88a78,#c83a32 60%,#b83028)"><svg style="left:2.2px;top:1.6px" width="10" height="9.6" viewBox="0 0 9 9"><path d="M0.8 0.8l7.4 7.4M8.2 0.800l-7.400 7.400" stroke="#fff" stroke-width="1.4"/></svg></div>
<!-- left list -->
<div class="a" style="left:135px;top:149.5px;width:113px;height:178.5px;background:#fff;border:1px solid #a9cfe8"></div>
<div class="a" style="left:135.5px;top:214.2px;width:111.5px;height:12.2px;background:#a3cbf0;border:1px solid #4f8fd4"></div>
<div class="li" style="top:151.3px">DISTRICT</div>
<div class="li" style="top:164.1px">District 2009 Finance: E...</div>
<div class="li" style="top:176.9px">TAKS Test: Grade 11 F...</div>
<div class="li" style="top:189.600px">TAKS Test: Grade 11 Hi...</div>
<div class="li" style="top:202.300px">Recoded Instructional E...</div>
<div class="li" style="top:215px;white-space:pre">Survey Question One  [...</div>
<svg style="left:0;top:0" width="960" height="720" viewBox="0 0 960 720">

<g transform="translate(137.5 152.0)"><path d="M0.800 8.700L12 0.300" stroke="#4a4a22" stroke-width="4.200" stroke-linecap="butt"/><path d="M1.300 8.330L11.500 0.680" stroke="#f2d21e" stroke-width="2" stroke-dasharray="1.900 0.700"/></g><g transform="translate(137.5 164.8)"><path d="M0.800 8.700L12 0.300" stroke="#4a4a22" stroke-width="4.200" stroke-linecap="butt"/><path d="M1.300 8.330L11.500 0.680" stroke="#f2d21e" stroke-width="2" stroke-dasharray="1.900 0.700"/></g><g transform="translate(137.5 177.5)"><path d="M0.800 8.700L12 0.300" stroke="#4a4a22" stroke-width="4.200" stroke-linecap="butt"/><path d="M1.300 8.330L11.500 0.680" stroke="#f2d21e" stroke-width="2" stroke-dasharray="1.900 0.700"/></g><g transform="translate(137.5 190.3)"><path d="M0.800 8.700L12 0.300" stroke="#4a4a22" stroke-width="4.200" stroke-linecap="butt"/><path d="M1.300 8.330L11.500 0.680" stroke="#f2d21e" stroke-width="2" stroke-dasharray="1.900 0.700"/></g><g transform="translate(137.5 215.8)"><path d="M0.800 8.700L12 0.300" stroke="#4a4a22" stroke-width="4.200" stroke-linecap="butt"/><path d="M1.300 8.330L11.500 0.680" stroke="#f2d21e" stroke-width="2" stroke-dasharray="1.900 0.700"/></g>
<circle cx="144.5" cy="205" r="2.7" fill="#5aa0e8" stroke="#2c6cc0" stroke-width="0.6"/><circle cx="141.5" cy="209.8" r="2.8" fill="#d82838" stroke="#901020" stroke-width="0.6"/><circle cx="147.3" cy="209.8" r="2.7" fill="#78c050" stroke="#3c8020" stroke-width="0.6"/>
<!-- red arrows -->
<path d="M88 213H114.4V207.2L132 216L114.4 225V219H88z" fill="#ff0000"/>
<path d="M263.7 224L272.5 241.7H267V259.2H260.5V241.7H255z" fill="#ff0000"/>
</svg>
<!-- move button -->
<div class="btn" style="left:255px;top:206px;width:24.2px;height:21px;border-color:#8a9ab0;background:linear-gradient(135deg,#fff 10%,#ececf0 50%,#d2d2da 95%)"><svg style="left:5.500px;top:5.300px" width="12" height="10" viewBox="261 212 12 10"><path d="M261.600 213.200c.4 3.400 2.400 4.400 5.600 4.200" fill="none" stroke="#5656d4" stroke-width="2.800"/><path d="M266.900 212.300L272.200 216.900L266.900 221.500z" fill="#5252d0"/></svg></div>
<!-- center -->
<div class="a" style="left:286px;top:139.5px;font-size:8.08px;white-space:nowrap;line-height:11px">Input <u>V</u>ariable -&gt; Output Variable:</div>
<div class="a" style="left:286px;top:149.5px;width:173px;height:128.5px;background:#fff;border:1px solid #8796a6"></div>
<!-- fieldset -->
<div class="a" style="left:466.5px;top:149px;width:90.5px;height:126.5px;border:1px solid #a6a6b2"></div>
<div class="a" style="left:469.5px;top:143.5px;padding:0 1.5px;background:#e4e3e9;color:#1f50a2;font-weight:bold;font-size:8.93px;white-space:nowrap;line-height:11px">Output Variable</div>
<div class="a" style="left:470px;top:159.5px;font-size:8.2px;color:#a2a2aa;line-height:11px"><u>N</u>ame:</div>
<div class="a" style="left:470px;top:170px;width:83px;height:13.5px;border:1px solid #a6a6b0"></div>
<div class="a" style="left:470px;top:185.5px;font-size:8.2px;color:#a2a2aa;line-height:11px"><u>L</u>abel:</div>
<div class="a" style="left:470px;top:196.3px;width:83px;height:13.5px;border:1px solid #a6a6b0"></div>
<div class="btn dis" style="left:485px;top:216px;width:52px;height:16px;line-height:15.8px">C<u>h</u>ange</div>
<div class="btn dis" style="left:286px;top:283.7px;width:106px;height:16px;line-height:15.6px"><u>O</u>ld and New Values...</div>
<div class="a" style="left:286px;top:305px;width:271.5px;height:23.5px;border:1px solid #a6a6b2"></div>
<div class="btn" style="left:290px;top:308.7px;width:35.5px;height:16.2px;line-height:15.4px"><u>I</u>f...</div>
<div class="a" style="left:326.5px;top:312px;font-size:8.2px;white-space:nowrap;line-height:11px">(optional case selection condition)</div>
<div class="btn" style="left:218px;top:334.5px;width:48.5px;height:15.5px;line-height:14px;border:1.5px solid #4c78b8;box-shadow:inset 0 0 0 1px #a9c4e6">OK</div>
<div class="btn" style="left:269.800px;top:334.5px;width:48.5px;height:15.5px;line-height:15px"><u>P</u>aste</div>
<div class="btn" style="left:321.600px;top:334.5px;width:48.5px;height:15.5px;line-height:15px"><u>R</u>eset</div>
<div class="btn" style="left:373.400px;top:334.5px;width:48.5px;height:15.5px;line-height:15px">Cancel</div>
<div class="btn" style="left:425px;top:334.5px;width:48.5px;height:15.5px;line-height:15px">Help</div>

</div></body></html>
